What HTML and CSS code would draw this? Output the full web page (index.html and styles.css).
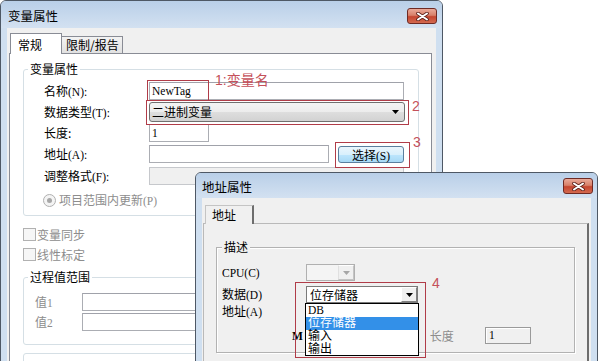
FILE: index.html
```html
<!DOCTYPE html>
<html>
<head>
  <meta charset="UTF-8">
  <title>变量属性</title>
  <link rel="stylesheet" href="styles.css">
</head>
<body>
  <div class="win win-main">
    <div class="titlebar">
      <span class="title">变量属性</span>
      <span class="close">
        <svg width="13" height="9" viewBox="0 0 13 9">
          <path d="M2 1.5 L11 7.5 M11 1.5 L2 7.5" stroke="#5a1f18" stroke-width="3.6" stroke-linecap="round"/>
          <path d="M2 1.5 L11 7.5 M11 1.5 L2 7.5" stroke="#fff" stroke-width="2" stroke-linecap="round"/>
        </svg>
      </span>
    </div>
    <div class="client">
      <div class="tabs">
        <span class="tab active">常规</span>
        <span class="tab">限制/报告</span>
      </div>
      <div class="pane">
        <div class="group group-var">
          <span class="legend">变量属性</span>
          <div class="row r-name">
            <span class="lbl">名称<span class="m">(N):</span></span>
            <span class="field w-name m">NewTag</span>
          </div>
          <div class="row r-type">
            <span class="lbl">数据类型<span class="m">(T):</span></span>
            <span class="combo">
              <span class="combo-text">二进制变量</span>
              <svg width="7" height="4" viewBox="0 0 7 4"><path d="M0 0 H7 L3.5 4 Z" fill="#000"/></svg>
            </span>
          </div>
          <div class="row r-len">
            <span class="lbl">长度:</span>
            <span class="field w-len m">1</span>
          </div>
          <div class="row r-addr">
            <span class="lbl">地址<span class="m">(A):</span></span>
            <span class="field w-addr"></span>
            <span class="btn">选择<span class="m">(S)</span></span>
          </div>
          <div class="row r-fmt">
            <span class="lbl">调整格式<span class="m">(F):</span></span>
            <span class="field off w-name"></span>
          </div>
          <div class="row r-proj dis">
            <span class="radio"></span>
            <span>项目范围内更新<span class="m">(P)</span></span>
          </div>
        </div>

        <div class="cb-row first dis"><span class="check"></span>变量同步</div>
        <div class="cb-row dis"><span class="check"></span>线性标定</div>

        <div class="group group-range">
          <span class="legend">过程值范围</span>
          <div class="row r-v1">
            <span class="lbl-sm dis">值<span class="m">1</span></span>
            <span class="field w-val"></span>
          </div>
          <div class="row">
            <span class="lbl-sm dis">值<span class="m">2</span></span>
            <span class="field w-val"></span>
          </div>
        </div>

        <div class="group group-more"></div>
      </div>
    </div>

    <span class="mark mark-1"></span>
    <span class="mark mark-2"></span>
    <span class="mark mark-3"></span>
    <span class="note note-1">1:变量名</span>
    <span class="note note-2">2</span>
    <span class="note note-3">3</span>
  </div>

  <div class="win win-addr">
    <div class="titlebar">
      <span class="title">地址属性</span>
      <span class="close">
        <svg width="13" height="9" viewBox="0 0 13 9">
          <path d="M2 1.5 L11 7.5 M11 1.5 L2 7.5" stroke="#5a1f18" stroke-width="3.6" stroke-linecap="round"/>
          <path d="M2 1.5 L11 7.5 M11 1.5 L2 7.5" stroke="#fff" stroke-width="2" stroke-linecap="round"/>
        </svg>
      </span>
    </div>
    <div class="client">
      <div class="tabs">
        <span class="tab active">地址</span>
      </div>
      <div class="pane">
        <div class="group group-desc">
          <span class="legend">描述</span>
          <div class="row2 r-cpu">
            <span class="lbl2 m">CPU(C)</span>
            <span class="combo2 off">
              <span class="combo2-text"></span>
              <span class="drop"><svg width="7" height="4" viewBox="0 0 7 4"><path d="M0 0 H7 L3.5 4 Z" fill="#a6a6a6"/></svg></span>
            </span>
          </div>
          <div class="row2 r-data">
            <span class="lbl2">数据<span class="m">(D)</span></span>
            <span class="combo2 w-data">
              <span class="combo2-text">位存储器</span>
              <span class="drop"><svg width="7" height="4" viewBox="0 0 7 4"><path d="M0 0 H7 L3.5 4 Z" fill="#000"/></svg></span>
              <span class="list">
                <span class="opt m">DB</span>
                <span class="opt sel">位存储器</span>
                <span class="opt">输入</span>
                <span class="opt">输出</span>
              </span>
            </span>
          </div>
          <div class="row2 r-a">
            <span class="lbl2">地址<span class="m">(A)</span></span>
          </div>
          <div class="row2 r-m">
            <span class="m bold">M</span>
            <span class="dis len-lbl">长度</span>
            <span class="field2 m">1</span>
          </div>
        </div>
      </div>
    </div>

    <span class="mark mark-4"></span>
    <span class="note note-4">4</span>
  </div>
</body>
</html>
```

FILE: styles.css
```css
* {
  box-sizing: border-box;
}

body {
  margin: 0;
  width: 600px;
  height: 361px;
  overflow: hidden;
  position: relative;
  background: #fff;
  font-family: "Noto Sans CJK SC", sans-serif;
  font-size: 12px;
  line-height: 14px;
  color: #000;
}

.m {
  font-family: "Liberation Serif", "Noto Sans CJK SC", serif;
  font-size: 11.5px;
}

.bold {
  font-weight: bold;
}

.dis {
  color: #8d8d8d;
}

/* windows */
.win {
  position: absolute;
  display: flex;
  flex-direction: column;
  padding: 0 6px;
  background: #cfdff0;
  border: 1px solid #4e5865;
  border-radius: 6px 6px 0 0;
}

.win-main {
  left: 0;
  top: 0;
  width: 443px;
  height: 400px;
}

.win-addr {
  left: 195px;
  top: 172px;
  width: 403px;
  height: 220px;
}

.titlebar {
  display: flex;
  align-items: flex-start;
  flex: none;
  margin: 0 -6px;
  background: linear-gradient(#b9cfe8, #d3e1f1);
  border-radius: 5px 5px 0 0;
}

.win-main .titlebar {
  height: 27px;
  padding: 7px 5px 0 7px;
}

.win-addr .titlebar {
  height: 25px;
  padding: 5px 4px 0 6px;
}

.title {
  flex: 1;
  line-height: 16px;
  font-size: 12.5px;
}

.win-addr .title {
  margin-top: 1px;
}

.close {
  width: 30px;
  height: 16px;
  display: flex;
  align-items: center;
  justify-content: center;
  border: 1px solid #6e2a24;
  border-radius: 3px;
  background: linear-gradient(#eaa999, #d88069 45%, #c5452f 55%, #d36a50);
}

.client {
  flex: 1;
  display: flex;
  flex-direction: column;
  background: #f0f0f0;
}

.win-main .client {
  padding: 5px 4px 0 2px;
}

.win-addr .client {
  padding: 7px 2px 0 1px;
}

/* tabs */
.tabs {
  display: flex;
  align-items: flex-end;
  flex: none;
  position: relative;
  z-index: 1;
  margin-bottom: -1px;
}

.win-main .tabs {
  height: 21px;
  padding-left: 1px;
}

.win-main .tab {
  width: 61px;
  height: 17px;
  margin-bottom: 1px;
  padding: 1px 0 0 4px;
  border: 1px solid #898c95;
  border-left: 0;
  border-bottom: 0;
  background: linear-gradient(#f3f3f3, #e1e1e1);
}

.win-main .tab.active {
  width: 52px;
  height: 21px;
  margin-bottom: 0;
  padding: 4px 0 0 7px;
  border-left: 1px solid #898c95;
  background: #fff;
}

.win-addr .tabs {
  height: 19px;
  padding-left: 2px;
}

.win-addr .tab {
  width: 49px;
  height: 19px;
  padding: 2px 0 0 6px;
  border: 1px solid #c4c4c4;
  border-right: 2px solid #6d6d6d;
  border-bottom: 0;
  background: #f0f0f0;
}

.pane {
  flex: 1;
}

.win-main .pane {
  background: #fff;
  border: 1px solid #898c95;
  padding: 15px 12px 0 13px;
}

.win-addr .pane {
  background: #f0f0f0;
  border-top: 1px solid #b9b9b9;
  border-left: 1px solid #b9b9b9;
  border-right: 2px solid #6d6d6d;
  padding: 23px 12px 0 12px;
}

/* group boxes */
.group {
  border: 1px solid #d5dfe5;
  border-radius: 3px;
}

.legend {
  display: block;
  width: max-content;
  height: 12px;
  margin: -7px 0 0 4px;
  padding: 0 2px;
  line-height: 12px;
  background: #fff;
}

.group-var {
  padding: 0 0 8px 20px;
}

.group-var .legend {
  margin-left: -16px;
}

.group-range {
  margin-top: 16px;
  padding: 0 0 13px 11px;
}

.group-range .legend {
  margin-left: -7px;
}

.group-more {
  margin-top: 8px;
  height: 30px;
}

.group-desc {
  border: 1px solid #b2b2b2;
  border-radius: 0;
  box-shadow: inset 1px 1px 0 #fff, 1px 1px 0 #fff;
  padding: 0 0 8px 5px;
}

.group-desc .legend {
  margin-left: 0;
  background: #f0f0f0;
}

/* rows of the first window */
.row {
  display: flex;
  align-items: center;
  height: 18px;
  margin-top: 2px;
}

.r-name {
  margin-top: 7px;
}

.r-type {
  height: 20px;
}

.r-addr {
  margin-top: 3px;
}

.r-fmt {
  margin-top: 4px;
}

.r-proj {
  height: 14px;
  margin-top: 8px;
}

.r-v1 {
  margin-top: 10px;
}

.lbl {
  width: 105px;
  flex: none;
}

.lbl-sm {
  width: 47px;
  flex: none;
}

.field {
  height: 18px;
  border: 1px solid #abadb3;
  border-top-color: #a0a2aa;
  background: #fff;
  padding-left: 2px;
  line-height: 16px;
}

.field.off {
  background: #f0f0f0;
  border-color: #c6c8cc;
}

.w-name {
  width: 255px;
}

.w-len {
  width: 60px;
}

.w-addr {
  width: 180px;
}

.w-val {
  width: 320px;
}

.combo {
  display: flex;
  align-items: center;
  justify-content: space-between;
  width: 256px;
  height: 20px;
  padding: 0 5px 0 2px;
  border: 1px solid #707070;
  border-radius: 3px;
  background: linear-gradient(#f4f4f4, #ececec 50%, #dedede 51%, #d2d2d2);
}

.btn {
  width: 66px;
  height: 17px;
  margin-left: 9px;
  border: 1px solid #5a7f9e;
  border-radius: 3px;
  background: linear-gradient(#eaf6fd, #d9f0fc 50%, #bee6fd 51%, #a7d9f5);
  text-align: center;
  line-height: 15px;
}

.radio {
  width: 13px;
  height: 13px;
  margin: 0 3px 0 -1px;
  display: flex;
  align-items: center;
  justify-content: center;
  border: 1px solid #b0b0b0;
  border-radius: 50%;
  background: #f4f4f4;
}

.radio::after {
  content: "";
  width: 5px;
  height: 5px;
  border-radius: 50%;
  background: #a7a7a7;
}

.cb-row {
  display: flex;
  align-items: center;
  height: 13px;
  margin-top: 7px;
}

.cb-row.first {
  margin-top: 12px;
}

.check {
  width: 13px;
  height: 13px;
  margin-right: 1px;
  border: 1px solid #b1b1b1;
  background: #f6f6f6;
}

/* rows of the address window */
.row2 {
  display: flex;
  align-items: center;
  height: 17px;
}

.r-cpu {
  margin-top: 11px;
}

.r-data {
  margin-top: 5px;
}

.r-a {
  height: 14px;
  margin-top: 1px;
}

.r-m {
  margin-top: 9px;
  padding-left: 70px;
}

.lbl2 {
  width: 84px;
  flex: none;
}

.combo2 {
  position: relative;
  display: flex;
  width: 49px;
  height: 17px;
  border: 1px solid #7a7a7a;
  background: #fff;
}

.combo2.off {
  border-color: #b0b0b0;
  background: #f4f4f4;
}

.combo2.w-data {
  width: 112px;
}

.combo2-text {
  flex: 1;
  padding-left: 3px;
  line-height: 15px;
}

.drop {
  width: 16px;
  display: flex;
  align-items: center;
  justify-content: center;
  background: #f0f0f0;
  border: 1px solid;
  border-color: #fff #808080 #808080 #fff;
}

.combo2.off .drop {
  border-color: #fff #c4c4c4 #c4c4c4 #e0e0e0;
}

.list {
  position: absolute;
  left: -2px;
  top: 16px;
  width: 114px;
  height: 53px;
  border: 1px solid #000;
  background: #fff;
  display: flex;
  flex-direction: column;
  font-family: "Liberation Sans", "Noto Sans CJK SC", sans-serif;
}

.opt {
  height: 13px;
  line-height: 13px;
  padding-left: 2px;
}

.opt.sel {
  background: #3390e8;
  color: #fff;
}

.len-lbl {
  margin-left: 127px;
}

.field2 {
  width: 46px;
  height: 17px;
  margin-left: 31px;
  padding-left: 3px;
  line-height: 15px;
  border: 1px solid #9a9a9a;
  box-shadow: inset 1px 1px 0 #fff;
  background: #f0f0f0;
}

/* red annotations */
.mark {
  position: absolute;
  border: 1px solid #b03c48;
}

.mark-1 {
  left: 146px;
  top: 79px;
  width: 62px;
  height: 21px;
}

.mark-2 {
  left: 145px;
  top: 99px;
  width: 263px;
  height: 25px;
}

.mark-3 {
  left: 334px;
  top: 141px;
  width: 75px;
  height: 26px;
}

.mark-4 {
  left: 99px;
  top: 109px;
  width: 131px;
  height: 76px;
}

.note {
  position: absolute;
  color: #c4505a;
  font-family: "Liberation Sans", "Noto Sans CJK SC", sans-serif;
  font-size: 14px;
  line-height: 16px;
}

.note-1 {
  left: 214px;
  top: 71px;
}

.note-2 {
  left: 411px;
  top: 97px;
}

.note-3 {
  left: 412px;
  top: 133px;
}

.note-4 {
  left: 236px;
  top: 102px;
}
```
